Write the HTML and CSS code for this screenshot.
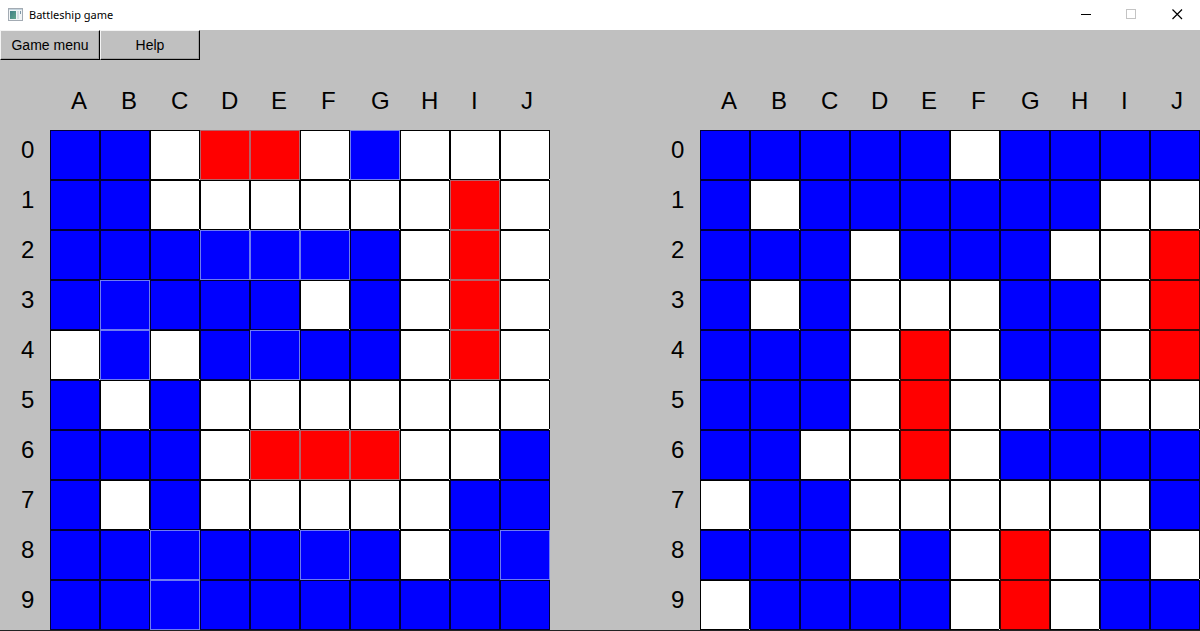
FILE: index.html
```html
<!DOCTYPE html>
<html lang="en">
<head>
<meta charset="utf-8">
<title>Battleship game</title>
<link rel="stylesheet" href="styles.css">
</head>
<body>
<header class="titlebar">
  <svg class="app-icon" width="15" height="13" viewBox="0 0 15 13" aria-hidden="true">
    <defs><linearGradient id="pane" x1="0" y1="0" x2="1" y2="1"><stop offset="0" stop-color="#3f7f86"/><stop offset="1" stop-color="#62a58c"/></linearGradient></defs>
    <rect x="0.5" y="0.5" width="14" height="12" fill="#f1f4f6" stroke="#a3abb3"/>
    <rect x="1" y="1" width="13" height="1" fill="#c3d3dd"/>
    <rect x="2" y="3" width="6" height="8" fill="url(#pane)"/>
    <rect x="9" y="3" width="2" height="8" fill="#d5dde2"/>
    <rect x="12" y="3" width="1" height="3" fill="#7d95a5"/>
  </svg>
  <h1 class="title">Battleship game</h1>
  <div class="window-controls">
    <button class="control" aria-label="Minimize"><svg width="11" height="11" viewBox="0 0 11 11"><path d="M1 5.5H11" stroke="#000"/></svg></button>
    <button class="control" aria-label="Maximize" disabled><svg width="11" height="11" viewBox="0 0 11 11"><rect x="0.5" y="0.5" width="9" height="9" fill="none" stroke="#c4c4c4"/></svg></button>
    <button class="control" aria-label="Close"><svg width="11" height="11" viewBox="0 0 11 11"><path d="M0.5 0.5L10 10M10 0.5L0.5 10" stroke="#000" stroke-width="1.2"/></svg></button>
  </div>
</header>
<nav class="menu">
  <button class="menu-item">Game menu</button>
  <button class="menu-item">Help</button>
</nav>
<main class="boards">
  <table class="board" aria-label="Your fleet">
    <thead>
      <tr><th></th><th scope="col">A</th><th scope="col">B</th><th scope="col">C</th><th scope="col">D</th><th scope="col">E</th><th scope="col">F</th><th scope="col">G</th><th scope="col">H</th><th scope="col">I</th><th scope="col">J</th></tr>
    </thead>
    <tbody>
      <tr><th scope="row">0</th><td><td><td class="miss"><td class="hit ship"><td class="hit ship"><td class="miss"><td class="ship"><td class="miss"><td class="miss"><td class="miss"></tr>
      <tr><th scope="row">1</th><td><td><td class="miss"><td class="miss"><td class="miss"><td class="miss"><td class="miss"><td class="miss"><td class="hit ship"><td class="miss"></tr>
      <tr><th scope="row">2</th><td><td><td><td class="ship"><td class="ship"><td class="ship"><td><td class="miss"><td class="hit ship"><td class="miss"></tr>
      <tr><th scope="row">3</th><td><td class="ship"><td><td><td><td class="miss"><td><td class="miss"><td class="hit ship"><td class="miss"></tr>
      <tr><th scope="row">4</th><td class="miss"><td class="ship"><td class="miss"><td><td class="ship"><td><td><td class="miss"><td class="hit ship"><td class="miss"></tr>
      <tr><th scope="row">5</th><td><td class="miss"><td><td class="miss"><td class="miss"><td class="miss"><td class="miss"><td class="miss"><td class="miss"><td class="miss"></tr>
      <tr><th scope="row">6</th><td><td><td><td class="miss"><td class="hit ship"><td class="hit ship"><td class="hit ship"><td class="miss"><td class="miss"><td></tr>
      <tr><th scope="row">7</th><td><td class="miss"><td><td class="miss"><td class="miss"><td class="miss"><td class="miss"><td class="miss"><td><td></tr>
      <tr><th scope="row">8</th><td><td><td class="ship"><td><td><td class="ship"><td><td class="miss"><td><td class="ship"></tr>
      <tr><th scope="row">9</th><td><td><td class="ship"><td><td><td><td><td><td><td></tr>
    </tbody>
  </table>
  <table class="board" aria-label="Enemy waters">
    <thead>
      <tr><th></th><th scope="col">A</th><th scope="col">B</th><th scope="col">C</th><th scope="col">D</th><th scope="col">E</th><th scope="col">F</th><th scope="col">G</th><th scope="col">H</th><th scope="col">I</th><th scope="col">J</th></tr>
    </thead>
    <tbody>
      <tr><th scope="row">0</th><td><td><td><td><td><td class="miss"><td><td><td><td></tr>
      <tr><th scope="row">1</th><td><td class="miss"><td><td><td><td><td><td><td class="miss"><td class="miss"></tr>
      <tr><th scope="row">2</th><td><td><td><td class="miss"><td><td><td><td class="miss"><td class="miss"><td class="hit"></tr>
      <tr><th scope="row">3</th><td><td class="miss"><td><td class="miss"><td class="miss"><td class="miss"><td><td><td class="miss"><td class="hit"></tr>
      <tr><th scope="row">4</th><td><td><td><td class="miss"><td class="hit"><td class="miss"><td><td><td class="miss"><td class="hit"></tr>
      <tr><th scope="row">5</th><td><td><td><td class="miss"><td class="hit"><td class="miss"><td class="miss"><td><td class="miss"><td class="miss"></tr>
      <tr><th scope="row">6</th><td><td><td class="miss"><td class="miss"><td class="hit"><td class="miss"><td><td><td><td></tr>
      <tr><th scope="row">7</th><td class="miss"><td><td><td class="miss"><td class="miss"><td class="miss"><td class="miss"><td class="miss"><td class="miss"><td></tr>
      <tr><th scope="row">8</th><td><td><td><td class="miss"><td><td class="miss"><td class="hit"><td class="miss"><td><td class="miss"></tr>
      <tr><th scope="row">9</th><td class="miss"><td><td><td><td><td class="miss"><td class="hit"><td class="miss"><td><td></tr>
    </tbody>
  </table>
</main>
</body>
</html>
```
FILE: styles.css
```css
* {
  box-sizing: border-box;
}

body {
  margin: 0;
  background: #c0c0c0;
  color: #000;
  font-family: "Liberation Sans", Arial, sans-serif;
}

.titlebar {
  display: flex;
  align-items: center;
  gap: 6px;
  height: 30px;
  padding: 0 0 2px 8px;
  background: #fff;
}

.title {
  margin: 0;
  font: 400 11px "Noto Sans", "Open Sans", sans-serif;
}

.window-controls {
  display: flex;
  margin-left: auto;
}

.control {
  display: flex;
  align-items: center;
  justify-content: center;
  width: 46px;
  height: 28px;
  padding: 0;
  border: 0;
  background: none;
}

.menu {
  display: flex;
}

.menu-item {
  width: 100px;
  height: 30px;
  padding: 0;
  border: 1px solid;
  border-color: #f4f4f4 #000 #000 #f4f4f4;
  background: #c0c0c0;
  box-shadow: inset -1px -1px #a0a0a0;
  color: #000;
  font: 14px "Liberation Sans", Arial, sans-serif;
}

.boards {
  display: flex;
  justify-content: space-between;
  border-bottom: 1px solid #222;
}

.board {
  border-spacing: 0;
  table-layout: fixed;
  width: 550px;
}

.board th {
  padding: 12px 0 0 21px;
  height: 70px;
  font-size: 24px;
  font-weight: 400;
  line-height: 28px;
  text-align: left;
}

.board tbody th {
  padding: 0 0 10px 21px;
  height: 50px;
}

.board td {
  position: relative;
  height: 50px;
  padding: 0;
  border: 1px solid #000038;
  background: #00f;
}

.board .ship {
  border-color: #6e7cf0;
}

.board .hit {
  border-color: #380808;
  background: #f00;
}

.board .hit.ship {
  border-color: #b0646c;
}

.board .miss {
  border-color: #000;
  background: #fff;
}

/* Light pixel in the lower right corner of an opened cell */
.board .miss::after {
  content: "";
  position: absolute;
  right: -1px;
  bottom: -1px;
  width: 1px;
  height: 1px;
  background: #fff;
}
```
